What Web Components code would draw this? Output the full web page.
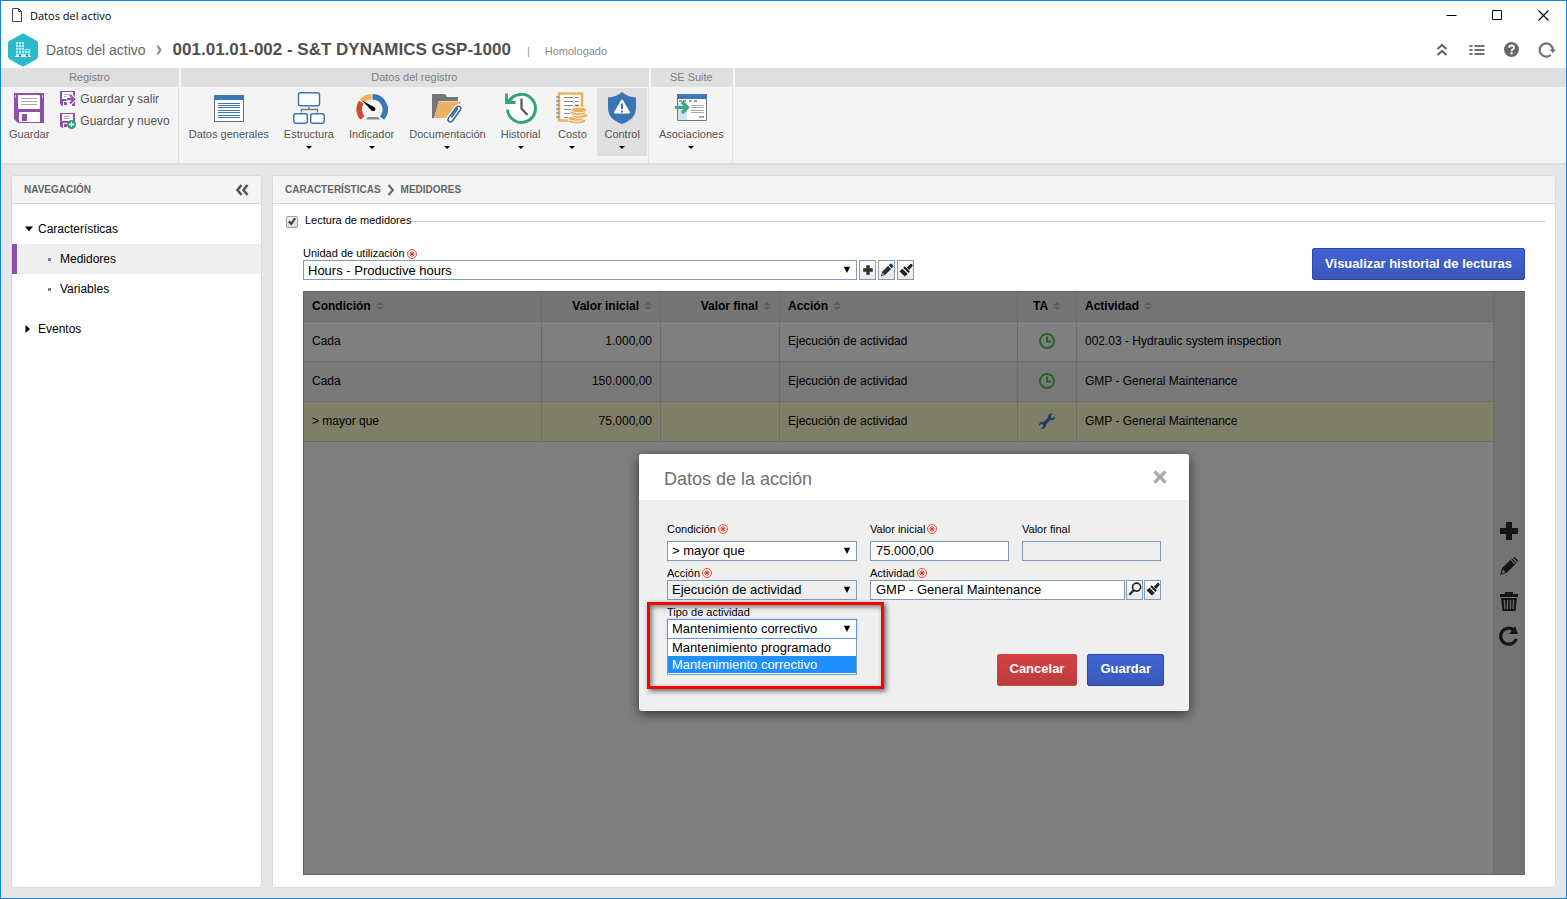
<!DOCTYPE html>
<html lang="es">
<head>
<meta charset="utf-8">
<title>Datos del activo</title>
<style>
  body {
    margin: 0;
    font-family: "Liberation Sans", Arial, sans-serif;
    font-size: 12px;
    color: #000;
    --line: #dadada;
    --field-line: #7f9db9;
    --purple: #8f51a8;
  }
</style>
</head>
<body>
<app-window>
  <window-bar slot="top">Datos del activo</window-bar>
  <record-header slot="top" section="Datos del activo" status="Homologado">001.01.01-002 - S&amp;T DYNAMICS GSP-1000</record-header>
  <ribbon-bar slot="top">
    <ribbon-group label="Registro">
      <ribbon-button icon="save">Guardar</ribbon-button>
      <div slot="side">
        <ribbon-button small icon="saveExit">Guardar y salir</ribbon-button>
        <ribbon-button small icon="saveNew">Guardar y nuevo</ribbon-button>
      </div>
    </ribbon-group>
    <ribbon-group label="Datos del registro">
      <ribbon-button icon="general">Datos generales</ribbon-button>
      <ribbon-button icon="structure" menu>Estructura</ribbon-button>
      <ribbon-button icon="gauge" menu>Indicador</ribbon-button>
      <ribbon-button icon="docs" menu>Documentación</ribbon-button>
      <ribbon-button icon="history" menu>Historial</ribbon-button>
      <ribbon-button icon="cost" menu>Costo</ribbon-button>
      <ribbon-button icon="control" menu active>Control</ribbon-button>
    </ribbon-group>
    <ribbon-group label="SE Suite">
      <ribbon-button icon="assoc" menu>Asociaciones</ribbon-button>
    </ribbon-group>
    <ribbon-group label="" fill></ribbon-group>
  </ribbon-bar>

  <side-nav></side-nav>

  <content-panel>
    <span slot="head">CARACTERÍSTICAS</span>
    <se-icon slot="head" name="crumb" width="8" height="12"></se-icon>
    <span slot="head">MEDIDORES</span>
    <meter-form></meter-form>
  </content-panel>
</app-window>

<script>
const icons = {
  file: ["0 0 12 14", `<path d="M1.5.5h6l3 3v10h-9zM7.5.5v3h3" fill="none" stroke="#444"/>`],
  minimize: ["0 0 11 11", `<path d="M.5 5.500h10" stroke="#000"/>`],
  maximize: ["0 0 11 11", `<path d="M.5.5h9v9h-9z" fill="none" stroke="#000"/>`],
  closeWin: ["0 0 11 11", `<path d="M.5.5l10 10M10.5.5l-10 10" stroke="#000" stroke-width="1.100"/>`],
  hex: ["0 0 32 34", `<path d="M14.500.9a3 3 0 0 1 3 0L29.500 7.800a3 3 0 0 1 1.500 2.600v13.200a3 3 0 0 1-1.500 2.600L17.500 33.100a3 3 0 0 1-3 0L2.500 26.200A3 3 0 0 1 1 23.600V10.400a3 3 0 0 1 1.500-2.600z" fill="#2cb9cc"/><path d="M9 9h8v7h6v7h1v1H8v-1h1z" fill="#b7f0f5"/><path d="M9 11.500h8M9 14.500h8M9 17.500h14M9 20.500h14M11.500 9v12M14.500 9v12M17.500 16v5M20.500 16v5" stroke="#2cb9cc" stroke-width=".7"/><path d="M8 23.500h16" stroke="#fff"/><path d="M12 21.500h2v2h-2zM19 21.500h2v2h-2z" fill="#24707c"/>`],
  chevron: ["0 0 6 10", `<path d="M.5.5h2.200L5.700 5 2.700 9.500H.5L3 5z" fill="#8c8c8c"/>`],
  crumb: ["0 0 8 12", `<path d="M1.500 1l4.500 5-4.500 5" fill="none" stroke="#666" stroke-width="2"/>`],
  up2: ["0 0 16 16", `<path d="M3.500 7L8 3l4.500 4M3.500 13L8 9l4.500 4" fill="none" stroke="#666" stroke-width="2.200"/>`],
  list: ["0 0 16 16", `<path d="M.5 4h3M.5 8h3M.5 12h3M5.500 4h10M5.500 8h10M5.500 12h10" stroke="#707070" stroke-width="2"/>`],
  help: ["0 0 16 16", `<circle cx="7.500" cy="7.500" r="7.500" fill="#666"/><path d="M5.100 5.800C5.200 2.800 10.100 2.800 10 5.700 9.900 7.400 7.600 7.300 7.600 9.200" fill="none" stroke="#fff" stroke-width="1.900"/><path d="M6.500 10.300h2.200v2H6.500z" fill="#fff"/>`],
  reload: ["0 0 18 16", `<path d="M12.600 13A6.600 6.600 0 1 1 14.900 8" fill="none" stroke="#707070" stroke-width="2.200"/><path d="M11.500 7.500h6.500L14.800 11z" fill="#707070"/>`],
  save: ["0 0 32 32", `<path d="M1 1h30v30H5l-4-4z" fill="#8f51a8"/><rect x="5" y="3" width="22" height="14" rx="1" fill="#fff"/><path d="M8 6.500h16M8 9.500h16M8 12.500h16" stroke="#aaa"/><path d="M6 20h21v10H6z" fill="#fff"/><path d="M9 22h5v7H9z" fill="#8f51a8"/><path d="M2 3h1v3H2zM29 3h1v3h-1z" fill="#c9a5d6"/>`],
  saveExit: ["0 0 16 16", `<path d="M0 0h15v15H2l-2-2z" fill="#8f51a8"/><path d="M2 1h11v7H2zM3 10h9v5H3z" fill="#fff"/><path d="M4 3.500h6M4 5.500h4" stroke="#aaa"/><path d="M4 11h3v3H4z" fill="#8f51a8"/><path d="M6.500 7h4.500M10 4l4.500 4.200L10 12.500M6.500 9.500h6" fill="none" stroke="#fff" stroke-width="4"/><path d="M7 8.200h6.500M10 4l4.200 4.200L10 12.500" fill="none" stroke="#8f51a8" stroke-width="2.200"/>`],
  saveNew: ["0 0 16 16", `<path d="M0 0h15v15H2l-2-2z" fill="#8f51a8"/><path d="M2 1h11v7H2zM3 10h9v5H3z" fill="#fff"/><path d="M4 3.500h6M4 5.500h6" stroke="#aaa"/><path d="M4 11h3v3H4z" fill="#8f51a8"/><circle cx="11.500" cy="11.500" r="4.500" fill="#2e9e70"/><path d="M11.500 8.800v5.400M8.800 11.500h5.400" stroke="#fff" stroke-width="1.300"/>`],
  general: ["0 0 32 32", `<path d="M1.500 3.500h29v26h-29z" fill="#fff" stroke="#666"/><path d="M1 3h30v5H1z" fill="#3d77b5"/><path d="M5 11.500h22M5 13.500h22M5 15.500h22M5 18.500h22M5 20.500h22M5 23.500h22M5 25.500h22" stroke="#3d77b5"/>`],
  structure: ["0 0 32 32", `<g fill="#fff" stroke="#3d77b5" stroke-width="1.500"><rect x="5.500" y=".8" width="21" height="13" rx="2"/><rect x=".8" y="21.800" width="13.500" height="9.500" rx="2"/><rect x="17.700" y="21.800" width="13.500" height="9.500" rx="2"/></g><path d="M16 14.500v3M8.500 20.500v-3h16v3" fill="none" stroke="#777" stroke-width="1.300"/>`],
  gauge: ["0 0 32 32", `<g fill="none" stroke-width="5.500"><path d="M6.500 26A12.800 12.800 0 0 1 5.300 10.200" stroke="#cb4b33"/><path d="M6 9A12.800 12.800 0 0 1 15.500 4.700" stroke="#eab263"/><path d="M16.500 4.700A12.800 12.800 0 0 1 26 26" stroke="#3d77b5"/></g><path d="M6 8.500l12 6.500c3 2 .5 5.500-2.500 3.500z" fill="#000"/><path d="M12 25h10l2 2.500H10z" fill="#888"/>`],
  docs: ["0 0 32 32", `<path d="M1 2h13l2 3h11v4H8L3 26H1z" fill="#777"/><path d="M7.500 9.500H30L25.500 26h-22z" fill="#eab263"/><path d="M20 23l6-8c1.500-2 5 .2 3.600 2.500l-8.200 11.500c-2 2.500-5.700 0-4-2.800l7-9.900c.8-1.200 2.400 0 1.800 1.200L20.500 25.500" fill="none" stroke="#fff" stroke-width="4"/><path d="M20 23l6-8c1.500-2 5 .2 3.600 2.500l-8.200 11.500c-2 2.500-5.700 0-4-2.800l7-9.900c.8-1.200 2.400 0 1.800 1.200L20.500 25.500" fill="none" stroke="#2c5fa5" stroke-width="1.400"/>`],
  history: ["0 0 32 32", `<path d="M4 10A14 14 0 1 1 2.500 17.500" fill="#fff" stroke="#36a377" stroke-width="3"/><path d="M1.500 1.500V10.500h9" fill="none" stroke="#36a377" stroke-width="2.800"/><path d="M2.500 9.500L9 3.500" stroke="#36a377" stroke-width="2"/><path d="M16.500 6.500v10l6 6.500" fill="none" stroke="#555" stroke-width="2.200"/>`],
  cost: ["0 0 32 32", `<path d="M3 1.500h23v27H3z" fill="#fff" stroke="#eab263" stroke-width="2.600"/><g stroke="#888"><path d="M8 5.500h9M19 5.500h4M8 9.500h9M19 9.500h4M8 13.500h9M8 17.500h7M8 21.500h6M8 25.500h5"/><path d="M18 3v14" stroke="#ccc"/></g><path d="M19 13.500h4" stroke="#d34040" stroke-width="1.500"/><path d="M0 5h4M0 9h4M0 13h4M0 17h4M0 21h4M0 25h4" stroke="#999" stroke-width="1.500"/><g fill="#eab263" stroke="#fff" stroke-width=".8"><ellipse cx="21" cy="29" rx="9" ry="2.900"/><ellipse cx="20" cy="26.500" rx="8" ry="2.700"/><ellipse cx="24" cy="23.500" rx="8" ry="2.800"/><ellipse cx="22" cy="20.700" rx="8" ry="2.800"/><ellipse cx="23" cy="18" rx="8" ry="2.800"/></g>`],
  control: ["0 0 32 32", `<path d="M16 0c4 3.500 8.500 5 14 5.500V16c0 8-5.500 13-14 16C7.500 29 2 24 2 16V5.500C7.500 5 12 3.500 16 0z" fill="#3a74b4"/><path d="M16 8.500l7 12H9z" fill="#fff" stroke="#fff" stroke-width="2" stroke-linejoin="round"/><path d="M16 11.500v5.500M16 18.500v2" stroke="#3a74b4" stroke-width="2"/>`],
  assoc: ["0 0 32 32", `<path d="M2.500 2.500h29v26h-29z" fill="#fff" stroke="#777"/><path d="M2 2h30v5H2z" fill="#3d77b5"/><path d="M3 11h9v17H3z" fill="#cfe3f5"/><path d="M4 9h7M14 9h3M19 9h3" stroke="#777" stroke-width="1.500" stroke-dasharray="3 1"/><path d="M16 13.500h13M16 15.500h13M16 18.500h13M16 20.500h13" stroke="#aaa"/><path d="M24 25h5" stroke="#888" stroke-width="1.500"/><path d="M0 15.500h11M7 10l5.500 5.500L7 21" fill="none" stroke="#3aa97d" stroke-width="3.200"/>`],
  caret: ["0 0 6 3", `<path d="M0 0h6L3 3z"/>`],
  collapse: ["0 0 14 12", `<path d="M6.500 1L2.500 6l4 5M12.500 1L8.500 6l4 5" fill="none" stroke="#555" stroke-width="2.600"/>`],
  open: ["0 0 10 10", `<path d="M1 2.500h8L5 7.500z"/>`],
  closed: ["0 0 10 10", `<path d="M1.500 1v8L6 5z"/>`],
  dot: ["0 0 8 8", `<path d="M3 3h3v3H3z" fill="#808080"/>`],
  required: ["0 0 10 10", `<circle cx="5" cy="5" r="4.500" fill="#fff" stroke="#e04030" stroke-width=".9"/><path d="M5 1.500v7M1.500 5h7M2.800 2.800l4.400 4.400M7.200 2.800L2.800 7.200" stroke="#dc2a1c" stroke-width=".8"/><circle cx="5" cy="5" r="1.300" fill="#dc2a1c"/>`],
  drop: ["0 0 8 8", `<path d="M.8.8h6.400L4 7z"/>`],
  plus: ["0 0 16 16", `<path d="M6 2.500h4V6h3.500v4H10v3.500H6V10H2.500V6H6z" fill="#333"/>`],
  pencil: ["0 0 16 16", `<path d="M1 15l1.500-5L9.200 3.300l3.500 3.500L6 13.500z" fill="#2b2b2b"/><path d="M2.200 13.800l1-2.600 1.600 1.600z" fill="#ddd"/><path d="M10 2.500l1.700-1.700c.8-.8 4.300 2.600 3.500 3.500L13.500 6z" fill="#2b2b2b"/>`],
  brush: ["0 0 16 16", `<path d="M9 5.500L13 1c1.200-.8 3.300 1.300 2.500 2.500L11.500 8z" fill="#222"/><path d="M6.500 3.800l6 6-1.700 1.700-6-6z" fill="#222"/><path d="M4 6.500l6 6-3.300 3L.5 9.500z" fill="#222"/>`],
  search: ["0 0 16 16", `<circle cx="9.800" cy="5.800" r="4.600" fill="none" stroke="#222" stroke-width="1.900"/><path d="M6.500 9.500L1.500 14.500" stroke="#222" stroke-width="2.600"/>`],
  sort: ["0 0 8 8", `<path d="M0 3.200L4 0l4 3.200zM0 4.800h8L4 8z" fill="#bcbcbc"/>`],
  clock: ["0 0 16 16", `<circle cx="8" cy="8" r="7" fill="none" stroke="#58c05a" stroke-width="2"/><path d="M8 3.500V8.500h4" fill="none" stroke="#58c05a" stroke-width="2"/>`],
  wrench: ["0 0 16 16", `<path d="M16 3.300c.2 3-2.500 4.500-4.600 3.700L7 11.400c.7 2.800-2.500 5-5 4l2.400-2.200-.7-1.700-1.800-.5L0 12.800c-.4-3 2.300-4.600 4.500-3.800L9 4.600C8.200 2 11 .1 13.800.7l-2.200 2 .5 1.700 1.800.6z" fill="#3a80c4"/>`],
  bigPlus: ["0 0 20 20", `<path d="M7 1h6v6h6v6h-6v6H7v-6H1V7h6z" fill="#2a2a2a"/>`],
  bigPencil: ["0 0 20 20", `<path d="M1 19l2-7L11.500 4 16 8.500 8 16.500z" fill="#2a2a2a"/><path d="M2.500 17.500l1.500-4 2.500 2.500z" fill="#ddd"/><path d="M12.300 3.200l.8-.8 4.500 4.500-.8.8z" fill="#2a2a2a"/><path d="M14 1.600c1.500-1.800 6 2.600 4.500 4.300z" fill="#2a2a2a"/>`],
  trash: ["0 0 20 20", `<path d="M1 3h5V1h8v2h5v3H1zM2 7h16l-1.500 13h-13z" fill="#2a2a2a"/><path d="M5.300 9l.7 9M8.500 9v9M11.500 9v9M14.700 9l-.7 9" stroke="#ddd" stroke-width="1.300"/>`],
  bigReload: ["0 0 20 20", `<path d="M17.200 13A8 8 0 1 1 14.800 4" fill="none" stroke="#2a2a2a" stroke-width="3.200"/><path d="M16 0l3 8h-9z" fill="#2a2a2a"/>`],
  closeDlg: ["0 0 14 14", `<path d="M1.500 1.500l11 11M12.500 1.500l-11 11" stroke="#aaa" stroke-width="3.200"/>`]
};

function render(host, html) {
  const template = document.createElement("template");
  template.innerHTML = html;
  host.attachShadow({ mode: "open" }).appendChild(template.content.cloneNode(true));
}

customElements.define(
  "se-icon",
  class SeIcon extends HTMLElement {
    connectedCallback() {
      if (this.shadowRoot) return;
      const [box, shapes] = icons[this.getAttribute("name")];
      const width = this.getAttribute("width") ?? 16;
      const height = this.getAttribute("height") ?? width;
      render(this, `
      <style>
        :host { display: inline-flex; flex: none; }
        svg { display: block; }
      </style>
      <svg viewBox="${box}" width="${width}" height="${height}" aria-hidden="true">${shapes}</svg>
      `);
    }
  }
);

customElements.define(
  "app-window",
  class AppWindow extends HTMLElement {
    constructor() {
      super();
      render(this, `
      <style>
        :host {
          display: flex;
          flex-direction: column;
          box-sizing: border-box;
          min-height: 100vh;
          border: 1px solid #1883d7;
          background: #e6e6e6;
        }
        main {
          flex: 1;
          display: grid;
          grid-template-columns: 251px minmax(0, 1fr);
          gap: 10px;
          padding: 10px;
        }
      </style>
      <slot name="top"></slot>
      <main><slot></slot></main>
      `);
    }
  }
);

customElements.define(
  "window-bar",
  class WindowBar extends HTMLElement {
    constructor() {
      super();
      render(this, `
      <style>
        :host {
          display: flex;
          align-items: center;
          height: 28px;
          padding: 0 0 2px 10px;
          background: #fff;
          font-family: "Open Sans", "Noto Sans", sans-serif;
          font-size: 11px;
        }
        .name { flex: 1; padding-left: 7px; }
        button {
          display: flex;
          align-items: center;
          justify-content: center;
          width: 46px;
          height: 28px;
          padding: 0;
          border: 0;
          background: none;
        }
      </style>
      <se-icon name="file" width="12" height="14"></se-icon>
      <span class="name"><slot></slot></span>
      <button aria-label="Minimizar"><se-icon name="minimize" width="11"></se-icon></button>
      <button aria-label="Maximizar"><se-icon name="maximize" width="11"></se-icon></button>
      <button aria-label="Cerrar"><se-icon name="closeWin" width="11"></se-icon></button>
      `);
    }
  }
);

customElements.define(
  "record-header",
  class RecordHeader extends HTMLElement {
    connectedCallback() {
      if (this.shadowRoot) return;
      render(this, `
      <style>
        :host {
          display: flex;
          align-items: center;
          height: 37px;
          padding: 0 2px 0 6px;
          background: #fff;
          color: #666;
        }
        .section { margin: 0 10px 0 7px; font-size: 14px; }
        h1 { margin: 0 0 0 11px; font-size: 17px; line-height: 20px; color: #505050; }
        .status { flex: 1; padding-top: 2px; font-size: 11px; color: #888; }
        .bar { margin: 0 15px 0 16px; padding-top: 2px; font-size: 11px; color: #999; }
        button {
          display: flex;
          align-items: center;
          justify-content: center;
          width: 35px;
          height: 24px;
          padding: 0;
          border: 0;
          background: none;
        }
      </style>
      <se-icon name="hex" width="32" height="34"></se-icon>
      <span class="section">${this.getAttribute("section")}</span>
      <se-icon name="chevron" width="6" height="10"></se-icon>
      <h1><slot></slot></h1>
      <span class="bar">|</span>
      <span class="status">${this.getAttribute("status")}</span>
      <button aria-label="Contraer"><se-icon name="up2"></se-icon></button>
      <button aria-label="Lista"><se-icon name="list"></se-icon></button>
      <button aria-label="Ayuda"><se-icon name="help"></se-icon></button>
      <button aria-label="Actualizar"><se-icon name="reload" width="18" height="16"></se-icon></button>
      `);
    }
  }
);

customElements.define(
  "ribbon-bar",
  class RibbonBar extends HTMLElement {
    constructor() {
      super();
      render(this, `
      <style>
        :host {
          display: flex;
          gap: 2px;
          height: 95px;
          background: #f4f4f4;
          border-bottom: 2px solid #dcdcdc;
        }
      </style>
      <slot></slot>
      `);
    }
  }
);

customElements.define(
  "ribbon-group",
  class RibbonGroup extends HTMLElement {
    connectedCallback() {
      if (this.shadowRoot) return;
      render(this, `
      <style>
        :host {
          display: flex;
          flex-direction: column;
          border-right: 1px solid #e2e2e2;
        }
        :host([fill]) { flex: 1; border: 0; }
        header {
          height: 19px;
          line-height: 19px;
          background: #dfdfdf;
          color: #808080;
          font-size: 11px;
          text-align: center;
        }
        .items { display: flex; gap: 1px; padding: 1px 1px 0; }
      </style>
      <header>${this.getAttribute("label")}</header>
      <div class="items"><slot></slot><slot name="side"></slot></div>
      `);
    }
  }
);

customElements.define(
  "ribbon-button",
  class RibbonButton extends HTMLElement {
    connectedCallback() {
      if (this.shadowRoot) return;
      const small = this.hasAttribute("small");
      render(this, `
      <style>
        :host { display: block; }
        button {
          display: flex;
          flex-direction: column;
          align-items: center;
          min-width: 48px;
          height: 68px;
          padding: 4px 7px 0;
          border: 0;
          background: none;
          font-family: inherit;
          font-size: 11px;
          line-height: 14px;
          color: #555;
          white-space: nowrap;
        }
        .caret { margin-top: 5px; }
        .label { margin-top: 3px; }
        :host([active]) button { background: #dfdfdf; }
        :host([small]) button {
          flex-direction: row;
          gap: 4px;
          height: 22px;
          padding: 0 7px 0 3px;
          font-size: 12px;
        }
        :host([small]) .label { margin: 0; }
      </style>
      <button type="button">
        <se-icon name="${this.getAttribute("icon")}" width="${small ? 16 : 32}"></se-icon>
        <span class="label"><slot></slot></span>
        ${this.hasAttribute("menu") ? `<se-icon class="caret" name="caret" width="6" height="3"></se-icon>` : ""}
      </button>
      `);
    }
  }
);

const panelStyles = `
  :host {
    display: flex;
    flex-direction: column;
    box-sizing: border-box;
    border: 1px solid var(--line);
    border-radius: 3px;
    background: #fff;
  }
  .head {
    display: flex;
    align-items: center;
    height: 26px;
    padding: 1px 12px 0;
    border-bottom: 1px solid var(--line);
    background: #f4f4f4;
    color: #666;
    font-size: 10px;
    font-weight: bold;
    line-height: 12px;
  }
`;

customElements.define(
  "side-nav",
  class SideNav extends HTMLElement {
    constructor() {
      super();
      render(this, `
      <style>
        ${panelStyles}
        .head { justify-content: space-between; }
        .head button { display: flex; padding: 0; border: 0; background: none; }
        ul { margin: 0; padding: 0; list-style: none; }
        nav { padding-top: 10px; }
        nav > ul > li { margin-bottom: 10px; }
        a {
          display: flex;
          align-items: center;
          gap: 4px;
          height: 30px;
          padding-left: 12px;
          color: #000;
          text-decoration: none;
        }
        ul ul a { gap: 7px; padding-left: 28px; border-left: 5px solid transparent; }
        a.current { border-left-color: var(--purple); background: #efefef; }
      </style>
      <div class="head">NAVEGACIÓN
        <button type="button" aria-label="Contraer navegación"><se-icon name="collapse" width="14" height="12"></se-icon></button>
      </div>
      <nav>
        <ul>
          <li>
            <a href="#caracteristicas"><se-icon name="open" width="10"></se-icon>Características</a>
            <ul>
              <li><a class="current" href="#medidores"><se-icon name="dot" width="8"></se-icon>Medidores</a></li>
              <li><a href="#variables"><se-icon name="dot" width="8"></se-icon>Variables</a></li>
            </ul>
          </li>
          <li><a href="#eventos"><se-icon name="closed" width="10"></se-icon>Eventos</a></li>
        </ul>
      </nav>
      `);
    }
  }
);

customElements.define(
  "content-panel",
  class ContentPanel extends HTMLElement {
    constructor() {
      super();
      render(this, `
      <style>
        ${panelStyles}
        .head { gap: 6px; }
      </style>
      <div class="head"><slot name="head"></slot></div>
      <slot></slot>
      `);
    }
  }
);

// Label above a select or a text box; the default slot takes the buttons beside it.
customElements.define(
  "form-field",
  class FormField extends HTMLElement {
    connectedCallback() {
      if (this.shadowRoot) return;
      const value = this.getAttribute("value") ?? "";
      const disabled = this.hasAttribute("disabled") ? "disabled" : "";
      const isSelect = this.getAttribute("type") === "select";
      const options = (this.getAttribute("options") ?? value).split("|");
      const control = isSelect
        ? `<div class="select">
            <select id="control" ${disabled}>${options.map((o) => `<option ${o === value ? "selected" : ""}>${o}</option>`).join("")}</select>
            <se-icon name="drop" width="8"></se-icon>
          </div>`
        : `<input id="control" type="text" value="${value}" ${disabled}>`;
      render(this, `
      <style>
        :host { display: block; min-width: 0; }
        label {
          display: flex;
          align-items: center;
          gap: 2px;
          height: 13px;
          font-size: 11px;
          line-height: 13px;
        }
        :host([spaced]) label { margin-bottom: 5px; }
        .row { display: flex; gap: var(--tool-gap, 1px); }
        .select { flex: 1; display: grid; align-items: center; min-width: 0; }
        .select > * { grid-area: 1 / 1; }
        .select se-icon { justify-self: end; margin-right: 6px; pointer-events: none; }
        select, input {
          box-sizing: border-box;
          width: 100%;
          min-width: 0;
          height: 20px;
          margin: 0;
          padding: 0 4px;
          border: 1px solid var(--field-line);
          border-radius: 0;
          background: #fff;
          color: #000;
          font-family: inherit;
          font-size: 13px;
          appearance: none;
        }
        input { flex: 1; padding: 0 5px; }
        :disabled { background: #efefef; opacity: 1; }
        :host([open]) select { border-color: #5b95e5; box-shadow: 0 0 1px #5b95e5; }
      </style>
      <label for="control">${this.getAttribute("label")}${this.hasAttribute("required") ? `<se-icon name="required" width="10"></se-icon>` : ""}</label>
      <div class="row">${control}<slot></slot></div>
      `);
    }
  }
);

customElements.define(
  "field-button",
  class FieldButton extends HTMLElement {
    connectedCallback() {
      if (this.shadowRoot) return;
      render(this, `
      <style>
        :host { display: block; }
        button {
          display: flex;
          align-items: center;
          justify-content: center;
          box-sizing: border-box;
          width: 17px;
          height: 20px;
          padding: 0 0 1px;
          border: 1px solid var(--field-line);
          background: linear-gradient(#fff, #e8e8e8);
        }
      </style>
      <button type="button" aria-label="${this.getAttribute("label")}"><se-icon name="${this.getAttribute("icon")}" width="14"></se-icon></button>
      `);
    }
  }
);

customElements.define(
  "action-button",
  class ActionButton extends HTMLElement {
    constructor() {
      super();
      render(this, `
      <style>
        :host { display: block; flex: none; }
        button {
          box-sizing: border-box;
          height: 32px;
          padding: 0 12px 2px;
          border: 1px solid #2c48ad;
          border-radius: 2px;
          background: linear-gradient(#4062d6, #3b58b8);
          color: #fff;
          font-family: inherit;
          font-size: 13px;
          font-weight: bold;
        }
        :host([danger]) button {
          border-color: #cf4545;
          background: linear-gradient(#d64242, #bb3c3e);
        }
      </style>
      <button type="button"><slot></slot></button>
      `);
    }
  }
);

customElements.define(
  "meter-form",
  class MeterForm extends HTMLElement {
    constructor() {
      super();
      render(this, `
      <style>
        :host { flex: 1; display: flex; flex-direction: column; padding: 11px 10px 12px 13px; }
        .legend { display: flex; align-items: center; height: 13px; margin-bottom: 19px; }
        .legend label { padding: 0 0 2px 7px; font-size: 11px; line-height: 13px; }
        .legend hr { flex: 1; margin: 0; border: 0; border-top: 1px solid #ccc; }
        input {
          display: grid;
          place-content: center;
          box-sizing: border-box;
          width: 12px;
          height: 12px;
          margin: 0;
          border: 1px solid #a0a0a0;
          border-radius: 2px;
          background: linear-gradient(#eee, #ddd);
          appearance: none;
        }
        input:checked::before {
          content: "";
          width: 8px;
          height: 8px;
          background: #404040;
          clip-path: polygon(0 55%, 20% 38%, 40% 58%, 78% 0, 100% 16%, 42% 100%);
        }
        .tools { display: flex; align-items: flex-end; justify-content: space-between; margin: 0 20px 11px 17px; }
        form-field { width: 611px; --tool-gap: 2px; }
        meter-grid { flex: 1; margin: 0 20px 0 17px; }
      </style>
      <div class="legend">
        <input type="checkbox" id="read" checked>
        <label for="read">Lectura de medidores</label>
        <hr>
      </div>
      <div class="tools">
        <form-field type="select" label="Unidad de utilización" value="Hours - Productive hours" required>
          <field-button icon="plus" label="Agregar"></field-button>
          <field-button icon="pencil" label="Editar"></field-button>
          <field-button icon="brush" label="Limpiar"></field-button>
        </form-field>
        <action-button>Visualizar historial de lecturas</action-button>
      </div>
      <meter-grid></meter-grid>
      `);
    }
  }
);

customElements.define(
  "meter-grid",
  class MeterGrid extends HTMLElement {
    constructor() {
      super();
      const columns = ["Condición", "Valor inicial", "Valor final", "Acción", "TA", "Actividad"];
      const rows = [
        ["Cada", "1.000,00", "", "Ejecución de actividad", "clock", "002.03 - Hydraulic system inspection"],
        ["Cada", "150.000,00", "", "Ejecución de actividad", "clock", "GMP - General Maintenance"],
        ["&gt; mayor que", "75.000,00", "", "Ejecución de actividad", "wrench", "GMP - General Maintenance"]
      ];
      const tools = [["bigPlus", "Agregar"], ["bigPencil", "Editar"], ["trash", "Eliminar"], ["bigReload", "Actualizar"]];
      render(this, `
      <style>
        :host {
          position: relative;
          display: grid;
          grid-template-columns: minmax(0, 1fr) 31px;
          box-sizing: border-box;
          border: 1px solid #c8c8c8;
          border-right: 0;
          background: #fff;
        }
        table { width: 100%; table-layout: fixed; border-collapse: separate; border-spacing: 0; align-self: start; }
        th, td {
          box-sizing: border-box;
          height: 40px;
          padding: 0 8px 2px;
          border: solid #d8d8d8;
          border-width: 0 1px 1px 0;
          text-align: left;
          white-space: nowrap;
        }
        th { height: 30px; background: #ebebeb; }
        th se-icon { margin-left: 5px; }
        tr > :nth-child(2), tr > :nth-child(3) { text-align: right; }
        tr > :nth-child(5) { text-align: center; }
        td se-icon { vertical-align: middle; }
        tbody tr:nth-child(2) { background: #f3f3f3; }
        tbody tr.selected { background: #ffffd2; }
        .rail {
          display: flex;
          flex-direction: column;
          justify-content: center;
          padding-right: 1px;
          border-left: 1px solid #d8d8d8;
          margin-left: -1px;
          background: #e6e6e6;
        }
        .rail button {
          display: flex;
          align-items: center;
          justify-content: center;
          height: 35px;
          padding: 0;
          border: 0;
          background: none;
        }
        .shade {
          position: absolute;
          inset: -1px 0 -1px -1px;
          display: grid;
          place-content: center;
          padding-bottom: 2px;
          background: rgba(0, 0, 0, .5);
        }
      </style>
      <table>
        <colgroup>
          <col style="width:238px"><col style="width:119px"><col style="width:119px">
          <col style="width:238px"><col style="width:59px"><col>
        </colgroup>
        <thead><tr>${columns.map((c) => `<th scope="col">${c}<se-icon name="sort" width="8"></se-icon></th>`).join("")}</tr></thead>
        <tbody>${rows.map((r, i) => `<tr class="${i === 2 ? "selected" : ""}">${r.map((c, n) => `<td>${n === 4 ? `<se-icon name="${c}" width="16"></se-icon>` : c}</td>`).join("")}</tr>`).join("")}</tbody>
      </table>
      <div class="rail">${tools.map(([icon, name]) => `<button type="button" aria-label="${name}"><se-icon name="${icon}" width="20"></se-icon></button>`).join("")}</div>
      <div class="shade"><action-dialog></action-dialog></div>
      `);
    }
  }
);

customElements.define(
  "action-dialog",
  class ActionDialog extends HTMLElement {
    constructor() {
      super();
      render(this, `
      <style>
        :host {
          display: block;
          width: 550px;
          border-radius: 3px;
          background: #efefef;
          box-shadow: 0 3px 12px rgba(0, 0, 0, .6);
        }
        header {
          display: flex;
          align-items: center;
          justify-content: space-between;
          height: 46px;
          padding: 0 22px 0 25px;
          border-radius: 3px 3px 0 0;
          background: #fff;
        }
        h2 { margin: 0; padding-top: 4px; font-size: 18px; font-weight: normal; line-height: 22px; color: #707070; }
        header button { display: flex; padding: 0; border: 0; background: none; }
        .fields {
          display: grid;
          grid-template-columns: 190px 139px 139px;
          gap: 6px 13px;
          padding: 23px 28px 15px;
        }
        .wide { grid-column: 2 / 4; }
        .type { position: relative; }
        .type ul {
          position: absolute;
          top: 33px;
          left: 0;
          right: 0;
          margin: 0;
          padding: 0 0 1px;
          border: 1px solid var(--field-line);
          border-top: 0;
          background: #fff;
          font-size: 13px;
          line-height: 17px;
          list-style: none;
        }
        li { padding: 0 4px; }
        li[aria-selected=true] { background: #1e90ff; color: #fff; }
        .frame {
          position: absolute;
          inset: -4px -27px -50px -20px;
          border: 3px solid #f00;
          box-shadow: 2px 2px 5px rgba(0, 0, 0, .6), inset 2px 2px 5px rgba(0, 0, 0, .5);
          pointer-events: none;
        }
        footer { display: flex; justify-content: flex-end; gap: 10px; padding: 0 25px 25px; }
      </style>
      <header>
        <h2>Datos de la acción</h2>
        <button type="button" aria-label="Cerrar"><se-icon name="closeDlg" width="14"></se-icon></button>
      </header>
      <div class="fields">
        <form-field spaced type="select" label="Condición" value="> mayor que" required></form-field>
        <form-field spaced label="Valor inicial" value="75.000,00" required></form-field>
        <form-field spaced label="Valor final" disabled></form-field>
        <form-field type="select" label="Acción" value="Ejecución de actividad" required disabled></form-field>
        <form-field class="wide" label="Actividad" value="GMP - General Maintenance" required>
          <field-button icon="search" label="Buscar"></field-button>
          <field-button icon="brush" label="Limpiar"></field-button>
        </form-field>
        <div class="type">
          <form-field open type="select" label="Tipo de actividad" value="Mantenimiento correctivo" options="Mantenimiento programado|Mantenimiento correctivo"></form-field>
          <ul role="listbox" aria-label="Tipo de actividad">
            <li role="option">Mantenimiento programado</li>
            <li role="option" aria-selected="true">Mantenimiento correctivo</li>
          </ul>
          <div class="frame"></div>
        </div>
      </div>
      <footer>
        <action-button danger>Cancelar</action-button>
        <action-button>Guardar</action-button>
      </footer>
      `);
    }
  }
);
</script>
</body>
</html>
